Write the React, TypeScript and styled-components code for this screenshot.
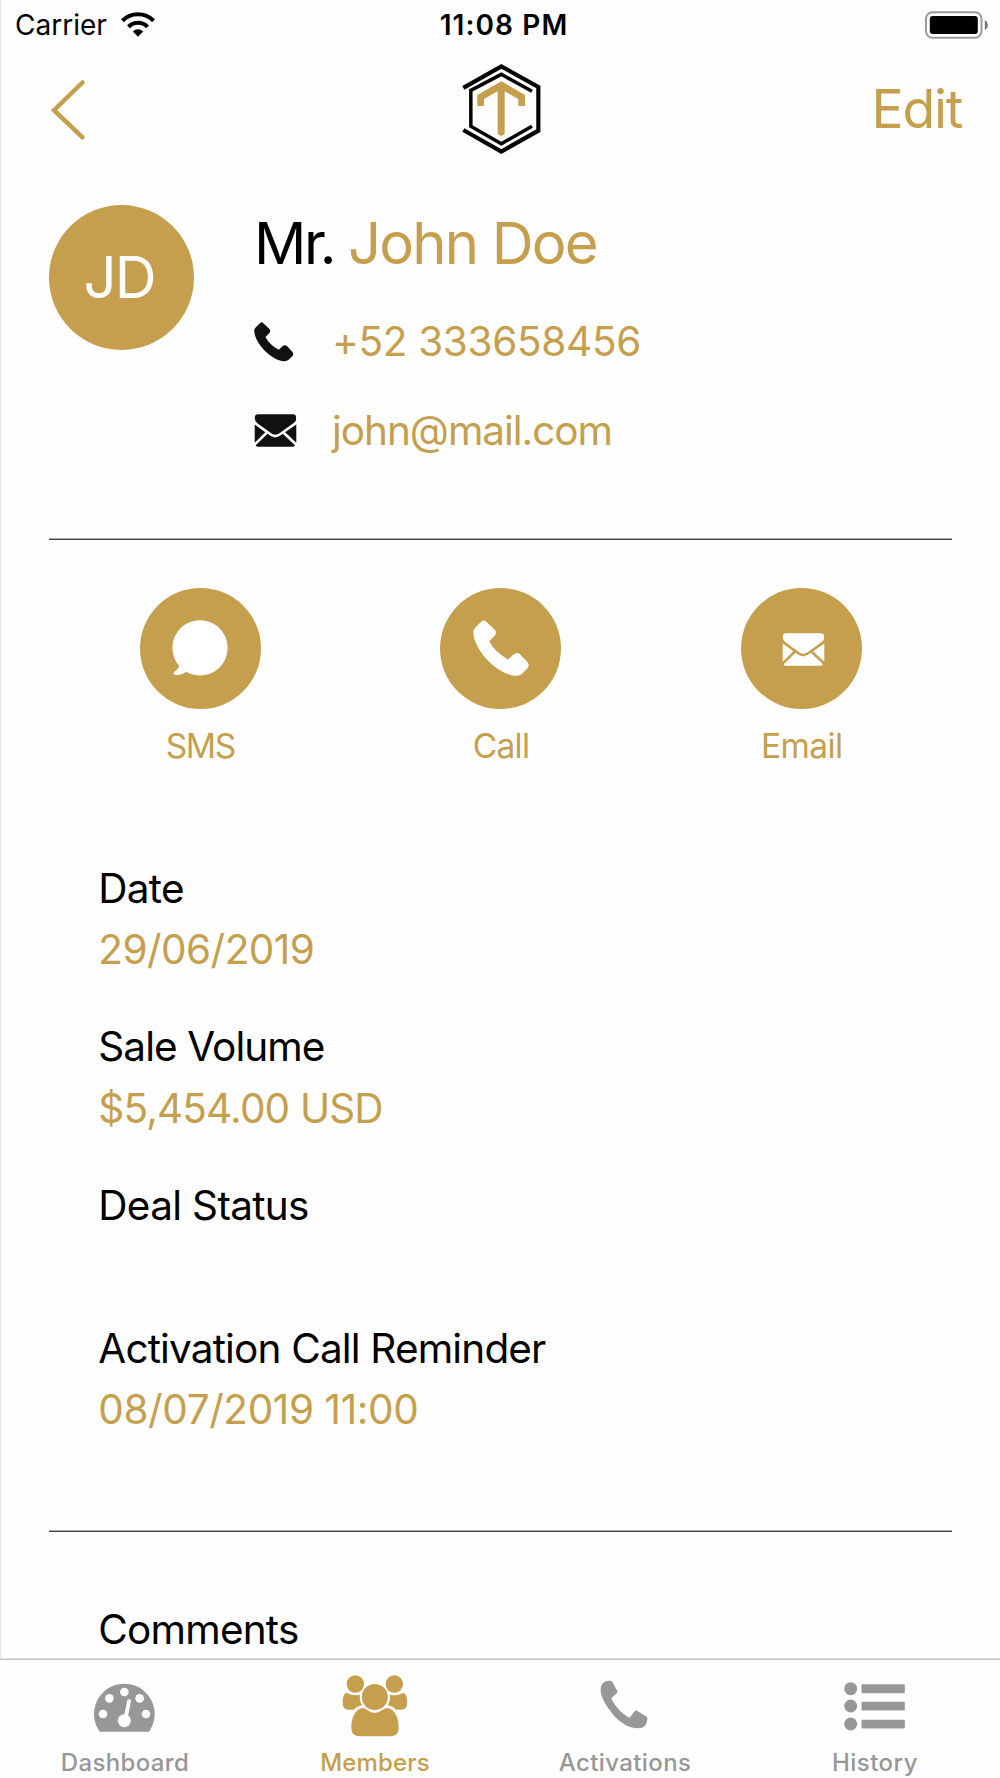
import React from "react";
import styled, { createGlobalStyle } from "styled-components";

const gold = "#c59f4d";
const grey = "#979797";

const GlobalStyle = createGlobalStyle`
  * { box-sizing: border-box; }
  body { margin: 0; background: #fefefe; }
`;

const Screen = styled.div`
  width: 1000px;
  height: 1778px;
  display: flex;
  flex-direction: column;
  overflow: hidden;
  background: #fefefe;
  color: #000;
  font-family: Inter, "Liberation Sans", sans-serif;
  white-space: nowrap;
`;

const Page = styled.div`
  height: 1658px;
  flex: none;
  overflow: hidden;
  border-left: 1px solid #e6e6e6;
`;

const Text = styled.span<{ $spacing?: number }>`
  letter-spacing: ${(p) => p.$spacing ?? 0}px;
`;

const StatusBar = styled.header`
  height: 50px;
  display: grid;
  grid-template-columns: 1fr auto 1fr;
  align-items: center;
  padding: 0 11px 0 14px;
  font-size: 28px;
  line-height: 50px;
`;

const Carrier = styled.div`
  display: flex;
  align-items: center;
  gap: 14px;

  svg {
    margin-bottom: 2px;
  }
`;

const Clock = styled.div`
  font-weight: 600;
  padding-left: 4px;
`;

const BatterySlot = styled.div`
  display: flex;
  justify-content: flex-end;
`;

const NavBar = styled.nav`
  height: 118px;
  display: grid;
  grid-template-columns: 1fr auto 1fr;
  align-items: center;
  padding: 0 37px 0 38px;
`;

const BackButton = styled.div`
  display: flex;
  padding-left: 10px;
`;

const EditButton = styled.button`
  justify-self: end;
  border: 0;
  padding: 0 1px 0 0;
  background: none;
  font: inherit;
  font-size: 53.5px;
  line-height: 64px;
  color: ${gold};
`;

const Profile = styled.section`
  display: flex;
  height: 370px;
  padding: 37px 0 0 48px;
`;

const Avatar = styled.div`
  width: 145px;
  height: 145px;
  flex: none;
  padding-right: 4.5px;
  border-radius: 50%;
  background: ${gold};
  color: #fff;
  font-size: 58px;
  line-height: 145px;
  text-align: center;
`;

const Info = styled.div`
  margin-left: 60px;
`;

const Name = styled.h1`
  margin: 3px 0 40px;
  font-size: 58px;
  font-weight: 400;
  line-height: 70px;
`;

const NameText = styled(Text)`
  color: ${gold};
`;

const Contact = styled.div`
  display: flex;
  align-items: center;
  height: 48px;
  margin-bottom: 41px;
  font-size: 40.5px;
  line-height: 48px;
  color: ${gold};
`;

const ContactIcon = styled.div<{ $raise?: number }>`
  width: 78px;
  display: flex;
  padding-bottom: ${(p) => p.$raise ?? 0}px;
  color: #111;
`;

const Divider = styled.hr`
  height: 2px;
  margin: 0 48px;
  border: 0;
  background: linear-gradient(#a8a8a8 50%, #4c4c4c 50%);
`;

const Actions = styled.section`
  display: grid;
  grid-template-columns: repeat(3, 1fr);
  margin: 0 48px 0 49px;
  padding-top: 48px;
  height: 317px;
`;

const Action = styled.div`
  display: flex;
  flex-direction: column;
  align-items: center;
  gap: 17px;
  font-size: 33.5px;
  line-height: 40px;
  color: ${gold};
`;

const ActionCircle = styled.div<{ $pad: string }>`
  width: 121px;
  height: 121px;
  display: flex;
  align-items: center;
  justify-content: center;
  padding: ${(p) => p.$pad};
  border-radius: 50%;
  background: ${gold};
  color: #fff;
`;

const Fields = styled.section<{ $height: number; $top?: number }>`
  display: flex;
  flex-direction: column;
  gap: 35.5px;
  height: ${(p) => p.$height}px;
  padding: ${(p) => p.$top ?? 0}px 0 0 97.3px;
  font-size: 40.5px;
  line-height: 61.5px;
`;

const FieldValue = styled.div`
  min-height: 46px;
  color: ${gold};
`;

const TabBar = styled.footer`
  height: 120px;
  display: grid;
  grid-template-columns: repeat(4, 1fr);
  border-top: 1px solid #dedede;
  box-shadow: inset 0 1px #c6c6c6;
`;

const Tab = styled.div<{ $active?: boolean }>`
  display: flex;
  flex-direction: column;
  align-items: center;
  padding-top: 15px;
  font-size: 24px;
  font-weight: 500;
  line-height: 34px;
  color: ${(p) => (p.$active ? gold : grey)};
`;

const TabIcon = styled.div<{ $pad: string }>`
  height: 64px;
  display: flex;
  align-items: center;
  padding: ${(p) => p.$pad};
  margin-bottom: 8px;
`;

const WifiIcon = () => (
  <svg width="34" height="25" viewBox="362 35 102 75" fill="none" stroke="#000" strokeWidth="12">
    <path d="M366.3 61.3A66 66 0 0 1 459.7 61.3M384.4 79.4A40.5 40.5 0 0 1 441.6 79.4" />
    <path d="M413 109L397.5 93.5A22 22 0 0 1 428.5 93.5Z" fill="#000" stroke="none" />
  </svg>
);

const BatteryIcon = () => (
  <svg width="64" height="28" viewBox="0 0 64 28">
    <rect x="1" y="1.2" width="55.5" height="25.6" rx="6.5" fill="none" stroke="#999" strokeWidth="2" />
    <rect x="4.8" y="5" width="48" height="18" rx="3" />
    <path d="M59.8 9Q63 11 63 14T59.8 19Z" fill="#777" />
  </svg>
);

const BackIcon = () => (
  <svg width="40" height="64" viewBox="0 0 40 64" fill="none" stroke={gold} strokeWidth="4.5" strokeLinecap="round">
    <path d="M33.5 5.5L5 33.2L33.5 60.3" />
  </svg>
);

const Logo = () => (
  <svg width="79" height="92" viewBox="187 190 237 276" fill="none" stroke="#050505">
    <path d="M191 264.5L305 200L416 262V393L305 455.5L191 391" strokeWidth="12.5" />
    <path d="M397 275L305 224L213.5 272V380L305 432L397 380" strokeWidth="10.5" />
    <path
      d="M305 245L376 286V319H356V298L315 275V402Q305 414 294 402V275L253 298V319H233V286Z"
      fill={gold}
      stroke="none"
    />
  </svg>
);

const HandsetIcon = ({ size }: { size: number }) => (
  <svg width={size} height={size} viewBox="1059 150 169 169" fill="currentColor">
    <path d="M1083 156Q1092 147 1100 156L1124 179Q1132 188 1125 197L1108 214Q1126 248 1165 269L1181 254Q1190 246 1199 252L1223 277Q1230 286 1224 295L1207 312Q1198 320 1184 318C1130 312 1064 242 1060 190Q1059 180 1066 173Z" />
  </svg>
);

const EnvelopeIcon = () => (
  <svg width="43" height="33" viewBox="248 189 128 100" fill="currentColor">
    <path d="M259 190H365Q374 190 374.5 200C375 209 372 213 366 217L327 245Q311 259 296 245L257 217Q249 210 249 201Q249 190 259 190Z" />
    <path d="M249 221L281 244L249 276ZM375 221L341 244L375 276Z" />
    <path d="M252 284L288 249Q311 271 334 249L371 284Q369 288 366 288H258Q253 288 252 284Z" />
  </svg>
);

const ChatIcon = () => (
  <svg width="56" height="56" viewBox="156 151 169 169" fill="currentColor">
    <circle cx="240.5" cy="235" r="83.5" />
    <path d="M179 288Q174 300 163 308Q156 315 168 317Q186 318 202 306Z" />
  </svg>
);

const GaugeIcon = () => (
  <svg width="61" height="49" viewBox="282 551 183 147" fill="#fefefe">
    <path d="M302 697Q299 697 297 694A91 91 0 1 1 449 694Q447 697 444 697Z" fill="currentColor" />
    <circle cx="373" cy="578" r="13" />
    <circle cx="328" cy="597" r="13" />
    <circle cx="419" cy="597" r="13" />
    <circle cx="309" cy="644" r="13" />
    <circle cx="438" cy="644" r="13" />
    <circle cx="373" cy="664" r="19.5" />
    <path d="M371 655L382 603Q384 599 389 600T393 606L383 655Z" />
  </svg>
);

const PeopleIcon = () => {
  const side =
    "M1038 578Q1058 589 1079 584Q1076 602 1086 616Q1070 618 1060 629H1045Q1027 629 1027 608Q1027 582 1038 578Z";
  return (
    <svg width="66" height="62" viewBox="1025 525 198 186" fill="currentColor">
      <circle cx="1065" cy="552" r="26" />
      <circle cx="1182" cy="552" r="26" />
      <circle cx="1123.5" cy="591" r="39" />
      <path d={side} />
      <path d={side} transform="translate(2247.5 0) scale(-1 1)" />
      <path d="M1087 624Q1094 624 1101 630Q1123 648 1146 630Q1153 624 1161 624C1185 628 1195 655 1195 685Q1195 709 1170 709H1078Q1053 709 1053 685C1053 655 1063 628 1087 624Z" />
    </svg>
  );
};

const CallTabIcon = () => (
  <svg width="48" height="49" viewBox="301 118 145 147" fill="currentColor">
    <path d="M315 123Q323 119 333 120Q337 120 339 124L353 150Q355 154 351 158L336 171Q335 173 337 178Q356 212 386 230Q391 232 394 227L406 212Q410 207 415 212L441 228Q445 231 444 236C442 252 436 258 428 262C395 270 355 245 333 212C315 188 305 168 303 152C302 138 307 127 315 123Z" />
  </svg>
);

const ListIcon = () => (
  <svg width="61" height="49" viewBox="1033 125 183 147" fill="currentColor">
    {[145, 197, 251].map((y) => (
      <g key={y}>
        <circle cx="1053" cy={y} r="19.5" />
        <rect x="1085.5" y={y - 13} width="130" height="26.5" rx="3" />
      </g>
    ))}
  </svg>
);

const actions = [
  { label: "SMS", spacing: -1.3, pad: "0 0 1px", icon: <ChatIcon /> },
  { label: "Call", spacing: -0.7, pad: "0 0 1px", icon: <HandsetIcon size={56} /> },
  { label: "Email", spacing: -0.6, pad: "2px 0 0 3px", icon: <EnvelopeIcon /> },
];

const fields = [
  { label: "Date", value: "29/06/2019", labelSpacing: -0.7, valueSpacing: -0.55 },
  { label: "Sale Volume", value: "$5,454.00 USD", labelSpacing: -0.94, valueSpacing: -0.83 },
  { label: "Deal Status", value: "", labelSpacing: -0.68, valueSpacing: 0 },
  { label: "Activation Call Reminder", value: "08/07/2019 11:00", labelSpacing: -0.84, valueSpacing: -0.4 },
];

const tabs = [
  { label: "Dashboard", spacing: 0.35, pad: "3px 1px 0 0", icon: <GaugeIcon /> },
  { label: "Members", spacing: 0.15, pad: "0 1px 0 0", active: true, icon: <PeopleIcon /> },
  { label: "Activations", spacing: 0.4, pad: "0 2px 4px 0", icon: <CallTabIcon /> },
  { label: "History", spacing: 0.45, pad: "0 2px 0 0", icon: <ListIcon /> },
];

export default function App() {
  return (
    <Screen>
      <GlobalStyle />
      <Page>
        <StatusBar>
          <Carrier>
            <Text>Carrier</Text>
            <WifiIcon />
          </Carrier>
          <Clock>
            <Text $spacing={1.1}>11:08 PM</Text>
          </Clock>
          <BatterySlot>
            <BatteryIcon />
          </BatterySlot>
        </StatusBar>
        <NavBar>
          <BackButton>
            <BackIcon />
          </BackButton>
          <Logo />
          <EditButton>
            <Text $spacing={-1.2}>Edit</Text>
          </EditButton>
        </NavBar>
        <Profile>
          <Avatar>
            <Text $spacing={-1.7}>JD</Text>
          </Avatar>
          <Info>
            <Name>
              <Text $spacing={-2.4}>Mr. </Text>
              <NameText $spacing={-1.8}>John Doe</NameText>
            </Name>
            <Contact>
              <ContactIcon>
                <HandsetIcon size={39.5} />
              </ContactIcon>
              <Text $spacing={-0.33}>+52 333658456</Text>
            </Contact>
            <Contact>
              <ContactIcon $raise={2}>
                <EnvelopeIcon />
              </ContactIcon>
              <Text $spacing={-1.04}>john@mail.com</Text>
            </Contact>
          </Info>
        </Profile>
        <Divider />
        <Actions>
          {actions.map((a) => (
            <Action key={a.label}>
              <ActionCircle $pad={a.pad}>{a.icon}</ActionCircle>
              <Text $spacing={a.spacing}>{a.label}</Text>
            </Action>
          ))}
        </Actions>
        <Fields $height={673} $top={0.9}>
          {fields.map((f) => (
            <div key={f.label}>
              <div>
                <Text $spacing={f.labelSpacing}>{f.label}</Text>
              </div>
              <FieldValue>
                <Text $spacing={f.valueSpacing}>{f.value}</Text>
              </FieldValue>
            </div>
          ))}
        </Fields>
        <Divider />
        <Fields $height={126} $top={67}>
          <Text $spacing={-0.8}>Comments</Text>
        </Fields>
      </Page>
      <TabBar>
        {tabs.map((t) => (
          <Tab key={t.label} $active={t.active}>
            <TabIcon $pad={t.pad}>{t.icon}</TabIcon>
            <Text $spacing={t.spacing}>{t.label}</Text>
          </Tab>
        ))}
      </TabBar>
    </Screen>
  );
}
